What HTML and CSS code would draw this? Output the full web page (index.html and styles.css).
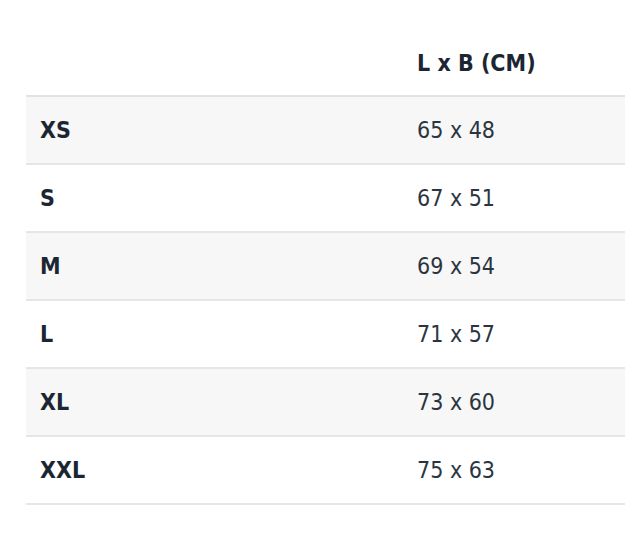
FILE: index.html
```html
<!DOCTYPE html>
<html>
<head>
<meta charset="utf-8">
<link rel="stylesheet" href="styles.css">
</head>
<body>
<div class="wrap">
  <table class="sizes">
    <thead>
      <tr><th class="c1"></th><th class="c2">L x B (CM)</th></tr>
    </thead>
    <tbody>
      <tr class="alt"><td class="c1">XS</td><td class="c2">65 x 48</td></tr>
      <tr><td class="c1">S</td><td class="c2">67 x 51</td></tr>
      <tr class="alt"><td class="c1">M</td><td class="c2">69 x 54</td></tr>
      <tr><td class="c1">L</td><td class="c2">71 x 57</td></tr>
      <tr class="alt"><td class="c1">XL</td><td class="c2">73 x 60</td></tr>
      <tr><td class="c1">XXL</td><td class="c2">75 x 63</td></tr>
    </tbody>
  </table>
</div>
</body>
</html>
```

FILE: styles.css
```css
html, body {
  margin: 0;
  padding: 0;
  background: #ffffff;
}
.wrap {
  padding: 31px 0 0 26px;
}
.sizes {
  border-collapse: collapse;
  width: 100%;
  font-family: "DejaVu Sans Condensed", "Liberation Sans", sans-serif;
  font-size: 23px;
  color: #1c2633;
}
.sizes th {
  height: 64px;
  padding: 0;
  text-align: left;
  font-weight: bold;
  border-bottom: 2px solid #e2e2e2;
}
.sizes td {
  height: 66px;
  padding: 0;
  border-bottom: 2px solid #e6e6e6;
}
.sizes .c1 {
  width: 377px;
  padding-left: 14px;
  font-weight: bold;
}
.sizes td.c2 {
  font-weight: normal;
  color: #2b3541;
}
.alt td {
  background: #f7f7f7;
}
```
